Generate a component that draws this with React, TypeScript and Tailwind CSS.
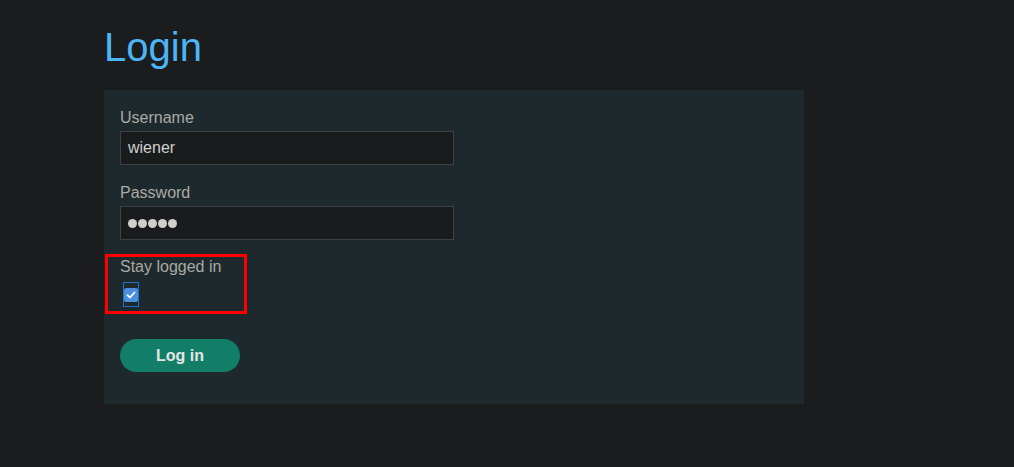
import React from "react";

const font = { fontFamily: '"Liberation Sans", Arial, sans-serif' };

function Field({ label, children, top }: { label: string; children: React.ReactNode; top: string }) {
  return (
    <div className={top}>
      <label className="block text-[16px] leading-[18px] text-[#a9aaa4]">{label}</label>
      {children}
    </div>
  );
}

export default function App() {
  return (
    <div className="min-h-[467px] w-full bg-[#1b1c1e]" style={font}>
      <div className="pl-[104px] pt-[24px]">
        <h1 className="text-[40px] leading-[46px] text-[#4cb5f5]">Login</h1>

        <div className="relative mt-[20px] w-[700px] bg-[#1e292e] px-[16px] pb-[32px] pt-[19px]">
          <Field label="Username" top="">
            <div className="mt-[4px] flex h-[34px] w-[334px] items-center border border-[#3b4144] bg-[#1a1b1d] px-[7px] text-[16px] text-[#cfd0cb]">
              wiener
            </div>
          </Field>

          <Field label="Password" top="mt-[19px]">
            <div className="mt-[4px] flex h-[34px] w-[334px] items-center gap-[1px] border border-[#3b4144] bg-[#1a1b1d] px-[7px]">
              {[0, 1, 2, 3, 4].map((i) => (
                <span key={i} className="h-[9px] w-[9px] rounded-full bg-[#cfd0cb]" />
              ))}
            </div>
          </Field>

          <div className="mt-[18px]">
            <label className="block text-[16px] leading-[18px] text-[#a9aaa4]">Stay logged in</label>
            <div className="ml-[3px] mt-[6px] flex h-[25px] w-[16px] items-center justify-center border border-[#1c72c9]">
              <span className="flex h-[14px] w-[14px] items-center justify-center rounded-[2px] bg-[#4b90dc]">
                <svg width="10" height="10" viewBox="0 0 10 10">
                  <path d="M1.5 5.2 L4 7.5 L8.5 2.5" fill="none" stroke="#ffffff" strokeWidth="1.8" strokeLinecap="round" strokeLinejoin="round" />
                </svg>
              </span>
            </div>
          </div>

          <button className="mt-[32px] flex h-[33px] w-[120px] items-center justify-center rounded-full bg-[#127e68] text-[16px] font-bold text-[#e6e6e6]">
            Log in
          </button>

          <div className="pointer-events-none absolute left-[1px] top-[164px] h-[60px] w-[142px] border-[3px] border-[#ff0000]" />
        </div>
      </div>
    </div>
  );
}
